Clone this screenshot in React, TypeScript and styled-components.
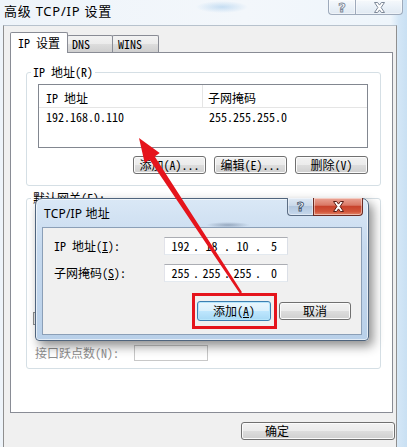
import React from "react";
import styled, { createGlobalStyle } from "styled-components";

const SONG = `"Noto Sans Mono CJK SC", "Noto Sans CJK SC", monospace`;
const UI = `"Noto Sans", "Noto Sans CJK SC", sans-serif`;

const Global = createGlobalStyle`
  html, body { margin: 0; padding: 0; background: #fff; }
  body { width: 407px; height: 447px; overflow: hidden; }
  * { box-sizing: border-box; }
`;

const Window = styled.div`
  position: relative;
  width: 407px;
  height: 447px;
  overflow: hidden;
  display: flex;
  flex-direction: column;
  font-family: ${SONG};
  font-size: 12px;
  color: #000;
  background:
    radial-gradient(ellipse 26px 6px at 222px 7px, rgba(160, 200, 235, 0.55), transparent),
    linear-gradient(to right, #eef4fa 0%, #f3f7fb 60%, #eef5fb 96%, #d3e6f6 98%, #c9e0f3 100%);
`;

const TitleBar = styled.div`
  height: 25px;
  flex: none;
  display: flex;
  align-items: flex-start;
  padding-left: 4px;
`;

const TitleText = styled.div`
  font-family: ${UI};
  font-size: 13px;
  line-height: 16px;
  margin-top: 3px;
  letter-spacing: 0.75px;
  color: #000;
`;

const Captions = styled.div<{ $mr: number; $mt: number }>`
  margin-left: auto;
  margin-right: ${p => p.$mr}px;
  margin-top: ${p => p.$mt}px;
  display: flex;
  align-self: flex-start;
`;

type CapKind = "inactive" | "help" | "close";

const capBg: Record<CapKind, string> = {
  inactive: "linear-gradient(to bottom, #f6f9fc 0%, #eaf1f8 50%, #e0e9f2 100%)",
  help: "linear-gradient(to bottom, #dfe9f4 0%, #c9d8e9 45%, #b3c7de 50%, #c6d8ec 100%)",
  close: "linear-gradient(to bottom, #eba596 0%, #da7966 42%, #c8432c 50%, #d2553a 80%, #e2876a 100%)",
};

const CapButton = styled.div<{ $w: number; $h: number; $kind: CapKind; $left?: boolean }>`
  width: ${p => p.$w}px;
  height: ${p => p.$h}px;
  display: flex;
  align-items: center;
  justify-content: center;
  border: 1px solid ${p => (p.$kind === "inactive" ? "#9eaabb" : p.$kind === "close" ? "#6a2a22" : "#5b6d84")};
  border-top: none;
  ${p => (p.$left ? "border-right: none;" : "")}
  border-radius: ${p => (p.$left ? "0 0 0 4px" : "0 0 4px 0")};
  background: ${p => capBg[p.$kind]};
  box-shadow: inset 0 0 0 1px rgba(255, 255, 255, 0.45);
`;

const HelpGlyph = styled.span<{ $stroke: string }>`
  font-family: "DejaVu Sans", sans-serif;
  font-weight: bold;
  font-size: 13px;
  line-height: 13px;
  color: #fff;
  -webkit-text-stroke: 0.9px ${p => p.$stroke};
`;

const XGlyph = ({ stroke }: { stroke: string }) => (
  <svg width="13" height="11" viewBox="0 0 13 11">
    <path
      d="M1.5 0.5 H4.6 L6.5 3.1 L8.4 0.5 H11.5 L8.1 5.5 L11.5 10.5 H8.4 L6.5 7.9 L4.6 10.5 H1.5 L4.9 5.5 Z"
      fill="#fff"
      stroke={stroke}
      strokeWidth="1"
      strokeLinejoin="round"
    />
  </svg>
);

const Client = styled.div`
  flex: 1;
  margin-left: 3px;
  width: 394px;
  background: #f0f0f0;
  border-left: 1px solid #8f8f8f;
  border-right: 1px solid #8f8f8f;
  border-top: 1px solid #b7c2cd;
  padding: 6px 3px 0 6px;
  display: flex;
  flex-direction: column;
`;

const TabStrip = styled.div`
  display: flex;
  align-items: flex-end;
  height: 20px;
`;

const Tab = styled.div<{ $w: number; $active?: boolean; $pl: number }>`
  width: ${p => p.$w}px;
  height: ${p => (p.$active ? 21 : 17)}px;
  margin-bottom: ${p => (p.$active ? -1 : 0)}px;
  margin-left: ${p => (p.$active ? 0 : -1)}px;
  position: relative;
  z-index: ${p => (p.$active ? 2 : 1)};
  border: 1px solid #898c95;
  border-bottom: none;
  border-radius: 2px 2px 0 0;
  background: ${p =>
    p.$active ? "#fff" : "linear-gradient(to bottom, #f3f3f3 0%, #ebebeb 50%, #dddddd 51%, #cfcfcf 100%)"};
  padding-left: ${p => p.$pl}px;
  display: flex;
  align-items: center;
  line-height: 12px;
`;

const TabPanel = styled.div`
  width: 383px;
  height: 361px;
  flex: none;
  background: #fff;
  border: 1px solid #898c95;
  padding: 13px 11px 0 15px;
  display: flex;
  flex-direction: column;
`;

const Group = styled.fieldset<{ $pad: string; $mt: number }>`
  margin: ${p => p.$mt}px 0 0 0;
  min-width: 0;
  border: 1px solid #d5dfe5;
  border-radius: 3px;
  padding: ${p => p.$pad};
  display: flex;
  flex-direction: column;
`;

const Legend = styled.legend<{ $ml: number }>`
  padding: 0 2px;
  margin-left: ${p => p.$ml}px;
  font-size: 12px;
  line-height: 12px;
`;

const ListView = styled.div<{ $h: number; $ml?: number }>`
  margin-top: 6px;
  margin-left: ${p => p.$ml ?? 0}px;
  width: 330px;
  height: ${p => p.$h}px;
  border: 1px solid #828790;
  background: #fff;
`;

const ListHeader = styled.div`
  display: grid;
  grid-template-columns: 164px 1fr;
  height: 23px;
  border-bottom: 1px solid #e5e5e5;
`;

const HeaderCell = styled.div<{ $pl: number; $sep?: boolean }>`
  padding: 3px 0 0 ${p => p.$pl}px;
  display: flex;
  align-items: center;
  line-height: 12px;
  ${p => (p.$sep ? "border-right: 1px solid #e5e5e5;" : "")}
`;

const ListRow = styled.div`
  display: grid;
  grid-template-columns: 164px 1fr;
  margin-top: 3px;
  line-height: 12px;
`;

const Cell = styled.div<{ $pl: number }>`
  padding-left: ${p => p.$pl}px;
  white-space: nowrap;
`;

const ButtonRow = styled.div`
  display: flex;
  justify-content: flex-end;
  gap: 8px;
  margin-top: 8px;
`;

const Button = styled.button<{ $w: number; $h?: number }>`
  width: ${p => p.$w}px;
  height: ${p => p.$h ?? 18}px;
  padding: 0;
  margin: 0;
  font-family: ${SONG};
  font-size: 12px;
  line-height: 12px;
  color: #000;
  border: 1px solid #707070;
  border-radius: 3px;
  background: linear-gradient(to bottom, #f2f2f2 0%, #ebebeb 50%, #dddddd 51%, #cfcfcf 100%);
  box-shadow: inset 0 0 0 1px #fbfbfb;
  display: flex;
  align-items: center;
  justify-content: center;
  white-space: nowrap;
`;

const OkButton = styled(Button)`
  justify-content: flex-start;
  padding-left: 23px;
`;

const DefaultButton = styled(Button)`
  border-color: #3c7fb1;
  background: linear-gradient(to bottom, #eaf6fd 0%, #d9f0fc 50%, #bee6fd 51%, #a7d9f5 100%);
  box-shadow: inset 0 0 0 1px #b6e5fb;
`;

const CheckRow = styled.div`
  display: flex;
  align-items: center;
  margin-top: 50px;
  height: 13px;
`;

const CheckBox = styled.span`
  width: 13px;
  height: 13px;
  border: 1px solid #8e8f8f;
  background: linear-gradient(135deg, #e4e4e4, #fdfdfd);
  display: flex;
  align-items: center;
  justify-content: center;
`;

const MetricRow = styled.div`
  display: flex;
  align-items: center;
  margin-top: 20px;
  margin-left: 2px;
`;

const DisabledLabel = styled.span`
  width: 99px;
  color: #8d8d8d;
  line-height: 12px;
`;

const DisabledInput = styled.div`
  width: 74px;
  height: 16px;
  border: 1px solid #c8c8c8;
  background: #fff;
`;

const Footer = styled.div`
  display: flex;
  justify-content: flex-end;
  margin-top: 9px;
  margin-right: -2px;
`;

/* ---------- dialog ---------- */

const Dialog = styled.div`
  position: absolute;
  left: 35px;
  top: 198px;
  width: 334px;
  height: 143px;
  z-index: 5;
  border: 1px solid #4f647d;
  border-radius: 7px 7px 4px 4px;
  padding: 0 6px 5px 6px;
  display: flex;
  flex-direction: column;
  background:
    radial-gradient(ellipse 22px 3px at 192px 26px, rgba(80, 100, 130, 0.45), transparent),
    linear-gradient(to bottom, #dae8f6 0%, #c6d9ee 35%, #b9d0e9 100%);
  box-shadow: inset 0 0 0 1px rgba(255, 255, 255, 0.6), 4px 5px 11px rgba(0, 0, 0, 0.45);
`;

const DialogTitleBar = styled.div`
  height: 28px;
  flex: none;
  display: flex;
  align-items: center;
  padding-left: 2px;
`;

const DialogTitle = styled.div`
  font-family: ${UI};
  font-size: 12px;
  line-height: 14px;
  margin-top: 1px;
  color: #000;
  letter-spacing: 0.2px;
`;

const DialogClient = styled.div`
  height: 108px;
  flex: none;
  background: #f0f0f0;
  border: 1px solid #8b9fb7;
  padding: 9px 10px 0 11px;
  display: flex;
  flex-direction: column;
`;

const FieldGrid = styled.div`
  display: grid;
  grid-template-columns: 110px 124px;
  row-gap: 9px;
  align-items: center;
`;

const FieldLabel = styled.div`
  line-height: 12px;
  white-space: nowrap;
`;

const IpField = styled.div`
  width: 124px;
  height: 18px;
  display: flex;
  align-items: center;
  padding-left: 3px;
  background: #fff;
  border: 1px solid;
  border-color: #abadb3 #dbdfe6 #e3e9ef #e2e3ea;
  line-height: 12px;
`;

const Seg = styled.span<{ $last?: boolean }>`
  width: 25px;
  ${p => (p.$last ? "flex: 1;" : "")}
  text-align: center;
`;

const Dot = styled.span`
  width: 6px;
  text-align: center;
`;

const DialogButtons = styled.div`
  display: flex;
  justify-content: flex-end;
  align-items: center;
  gap: 2px;
  margin-top: 11px;
`;

const RedBox = styled.div`
  border: 3px solid #e5141c;
  padding: 5px 3px 5px 2px;
`;

const ArrowLayer = styled.svg`
  position: absolute;
  left: 0;
  top: 0;
  z-index: 10;
  pointer-events: none;
`;

const IpValue = ({ parts }: { parts: string[] }) => (
  <IpField>
    {parts.map((p, i) => (
      <React.Fragment key={i}>
        <Seg $last={i === parts.length - 1}>{p}</Seg>
        {i < parts.length - 1 && <Dot>.</Dot>}
      </React.Fragment>
    ))}
  </IpField>
);

export default function App() {
  return (
    <>
      <Global />
      <Window>
        <TitleBar>
          <TitleText>高级 TCP/IP 设置</TitleText>
          <Captions $mr={4} $mt={0}>
            <CapButton $w={27} $h={15} $kind="inactive" $left>
              <HelpGlyph $stroke="#7d8898">?</HelpGlyph>
            </CapButton>
            <CapButton $w={48} $h={15} $kind="inactive">
              <XGlyph stroke="#7d8898" />
            </CapButton>
          </Captions>
        </TitleBar>

        <Client>
          <TabStrip>
            <Tab $w={58} $active $pl={7}>IP 设置</Tab>
            <Tab $w={46} $pl={4}>DNS</Tab>
            <Tab $w={47} $pl={5}>WINS</Tab>
          </TabStrip>

          <TabPanel>
            <Group $pad="0 12px 11px 11px" $mt={0}>
              <Legend $ml={-7}>IP 地址(R)</Legend>
              <ListView $h={64}>
                <ListHeader>
                  <HeaderCell $pl={7} $sep>IP 地址</HeaderCell>
                  <HeaderCell $pl={5}>子网掩码</HeaderCell>
                </ListHeader>
                <ListRow>
                  <Cell $pl={7}>192.168.0.110</Cell>
                  <Cell $pl={6}>255.255.255.0</Cell>
                </ListRow>
              </ListView>
              <ButtonRow>
                <Button $w={73}>添加(A)...</Button>
                <Button $w={73}>编辑(E)...</Button>
                <Button $w={73}>删除(V)</Button>
              </ButtonRow>
            </Group>

            <Group $pad="0 12px 7px 6px" $mt={6}>
              <Legend $ml={-2}>默认网关(F):</Legend>
              <ListView $h={52} $ml={5} />
              <CheckRow>
                <CheckBox>
                  <svg width="9" height="9" viewBox="0 0 9 9">
                    <path d="M1 4.5 L3.5 7 L8 1.5" fill="none" stroke="#4a5f97" strokeWidth="1.6" />
                  </svg>
                </CheckBox>
              </CheckRow>
              <MetricRow>
                <DisabledLabel>接口跃点数(N):</DisabledLabel>
                <DisabledInput />
              </MetricRow>
            </Group>
          </TabPanel>

          <Footer>
            <OkButton $w={154}>确定</OkButton>
          </Footer>
        </Client>

        <Dialog>
          <DialogTitleBar>
            <DialogTitle>TCP/IP 地址</DialogTitle>
            <Captions $mr={-1} $mt={-1}>
              <CapButton $w={26} $h={18} $kind="help" $left>
                <HelpGlyph $stroke="#44566e">?</HelpGlyph>
              </CapButton>
              <CapButton $w={50} $h={18} $kind="close">
                <XGlyph stroke="#5a1c14" />
              </CapButton>
            </Captions>
          </DialogTitleBar>
          <DialogClient>
            <FieldGrid>
              <FieldLabel>
                IP 地址(<u>I</u>):
              </FieldLabel>
              <IpValue parts={["192", "18", "10", "5"]} />
              <FieldLabel>
                子网掩码(<u>S</u>):
              </FieldLabel>
              <IpValue parts={["255", "255", "255", "0"]} />
            </FieldGrid>
            <DialogButtons>
              <RedBox>
                <DefaultButton $w={74} $h={20}>
                  添加(<u>A</u>)
                </DefaultButton>
              </RedBox>
              <Button $w={72} $h={18}>取消</Button>
            </DialogButtons>
          </DialogClient>
        </Dialog>

        <ArrowLayer width="407" height="447" viewBox="0 0 407 447">
          <polygon
            points="139,138 159.7,153.1 154.7,156.4 242,292.3 240,293.7 149.7,159.8 144.7,163.1"
            fill="#e5141c"
          />
        </ArrowLayer>
      </Window>
    </>
  );
}
